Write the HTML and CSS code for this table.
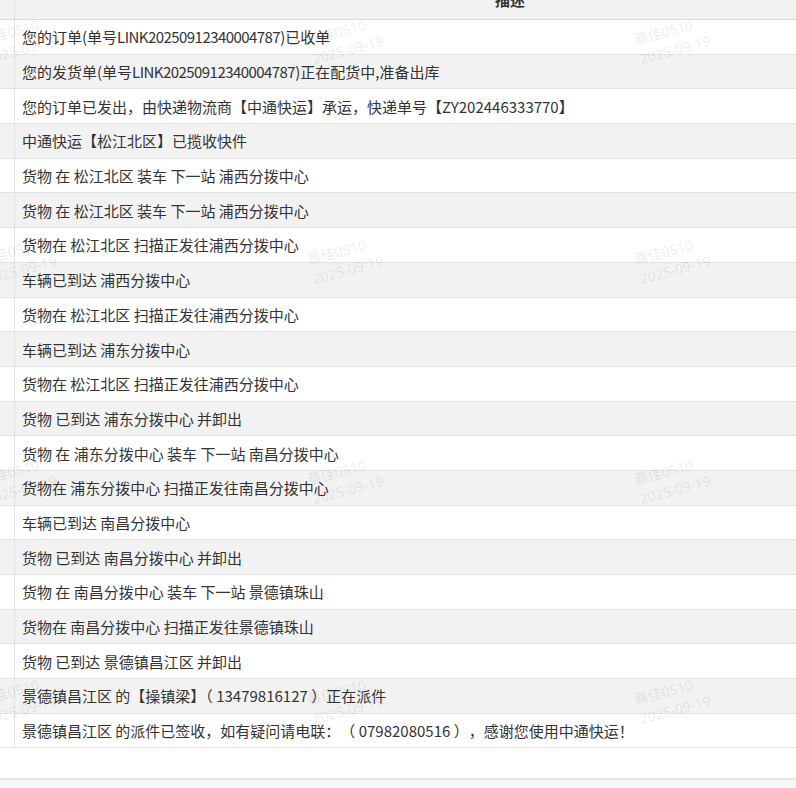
FILE: index.html
```html
<!DOCTYPE html>
<html lang="zh-CN">
<head>
<meta charset="utf-8">
<title>物流详情</title>
<link rel="stylesheet" href="styles.css">
</head>
<body>
<div class="page">
  <div class="panel">
    <div class="table">
      <div class="row head"><div class="idx"></div><div class="desc">描述</div></div>
      <div class="row"><div class="idx"></div><div class="desc">您的订单(单号<span class="code">LINK20250912340004787</span>)已收单</div></div>
      <div class="row"><div class="idx"></div><div class="desc">您的发货单(单号<span class="code">LINK20250912340004787</span>)正在配货中,准备出库</div></div>
      <div class="row"><div class="idx"></div><div class="desc">您的订单已发出，由快递物流商【中通快运】承运，快递单号【ZY202446333770】</div></div>
      <div class="row"><div class="idx"></div><div class="desc">中通快运【松江北区】已揽收快件</div></div>
      <div class="row"><div class="idx"></div><div class="desc">货物 在 松江北区 装车 下一站 浦西分拨中心</div></div>
      <div class="row"><div class="idx"></div><div class="desc">货物 在 松江北区 装车 下一站 浦西分拨中心</div></div>
      <div class="row"><div class="idx"></div><div class="desc">货物在 松江北区 扫描正发往浦西分拨中心</div></div>
      <div class="row"><div class="idx"></div><div class="desc">车辆已到达 浦西分拨中心</div></div>
      <div class="row"><div class="idx"></div><div class="desc">货物在 松江北区 扫描正发往浦西分拨中心</div></div>
      <div class="row"><div class="idx"></div><div class="desc">车辆已到达 浦东分拨中心</div></div>
      <div class="row"><div class="idx"></div><div class="desc">货物在 松江北区 扫描正发往浦西分拨中心</div></div>
      <div class="row"><div class="idx"></div><div class="desc">货物 已到达 浦东分拨中心 并卸出</div></div>
      <div class="row"><div class="idx"></div><div class="desc">货物 在 浦东分拨中心 装车 下一站 南昌分拨中心</div></div>
      <div class="row"><div class="idx"></div><div class="desc">货物在 浦东分拨中心 扫描正发往南昌分拨中心</div></div>
      <div class="row"><div class="idx"></div><div class="desc">车辆已到达 南昌分拨中心</div></div>
      <div class="row"><div class="idx"></div><div class="desc">货物 已到达 南昌分拨中心 并卸出</div></div>
      <div class="row"><div class="idx"></div><div class="desc">货物 在 南昌分拨中心 装车 下一站 景德镇珠山</div></div>
      <div class="row"><div class="idx"></div><div class="desc">货物在 南昌分拨中心 扫描正发往景德镇珠山</div></div>
      <div class="row"><div class="idx"></div><div class="desc">货物 已到达 景德镇昌江区 并卸出</div></div>
      <div class="row"><div class="idx"></div><div class="desc trim">景德镇昌江区 的【操镇梁】（ 13479816127 ）正在派件</div></div>
      <div class="row"><div class="idx"></div><div class="desc">景德镇昌江区 的派件已签收，如有疑问请电联：（ 07982080516 ），感谢您使用中通快运！</div></div>
    </div>
  </div>
  <div class="foot"></div>
</div>
<div class="watermarks">
  <div class="wm"><span>蔡佳0510</span><span>2025-09-19</span></div>
  <div class="wm"><span>蔡佳0510</span><span>2025-09-19</span></div>
  <div class="wm"><span>蔡佳0510</span><span>2025-09-19</span></div>
  <div class="wm"><span>蔡佳0510</span><span>2025-09-19</span></div>
  <div class="wm"><span>蔡佳0510</span><span>2025-09-19</span></div>
  <div class="wm"><span>蔡佳0510</span><span>2025-09-19</span></div>
  <div class="wm"><span>蔡佳0510</span><span>2025-09-19</span></div>
  <div class="wm"><span>蔡佳0510</span><span>2025-09-19</span></div>
  <div class="wm"><span>蔡佳0510</span><span>2025-09-19</span></div>
  <div class="wm"><span>蔡佳0510</span><span>2025-09-19</span></div>
  <div class="wm"><span>蔡佳0510</span><span>2025-09-19</span></div>
  <div class="wm"><span>蔡佳0510</span><span>2025-09-19</span></div>
</div>
</body>
</html>
```

FILE: styles.css
```css
html, body {
  margin: 0;
  padding: 0;
  height: 100%;
  overflow: hidden;
  background: #fff;
}
body {
  position: relative;
  font-family: "Noto Sans CJK SC", "Noto Sans", sans-serif;
  font-size: 15px;
  color: #333;
  text-spacing-trim: space-all;
  text-autospace: no-autospace;
}
.page {
  display: flex;
  flex-direction: column;
  height: 100%;
}
.panel {
  padding-bottom: 30px;
  background: #fff;
}
.table {
  width: 1005px;
  display: flex;
  flex-direction: column;
}
.row {
  display: flex;
  height: 34.7px;
  box-sizing: border-box;
  border-bottom: 1px solid #e2e2e2;
}
.row:nth-child(odd) {
  background: #f2f2f2;
}
.row.head {
  height: 40px;
  margin-top: -20px;
  background: #f2f2f2;
  border-bottom: 1px solid #d9d9d9;
  font-weight: bold;
}
.idx {
  width: 14px;
  flex: none;
  border-right: 1px solid #e2e2e2;
}
.desc {
  flex: 1;
  display: flex;
  align-items: center;
  padding-left: 7px;
  white-space: nowrap;
}
.desc.trim {
  text-spacing-trim: normal;
}
.code {
  letter-spacing: -0.55px;
}
.head .desc {
  justify-content: center;
  padding-left: 0;
}
.foot {
  flex: 1;
  background: #f5f6f7;
  border-top: 1px solid #e4e4e4;
  box-shadow: inset 0 1px 1px rgba(0,0,0,0.04);
}
.watermarks {
  position: absolute;
  left: -18px;
  top: 20px;
  display: grid;
  grid-template-columns: repeat(3, 327px);
  grid-auto-rows: 220px;
  pointer-events: none;
}
.wm {
  width: 76px;
  height: 40px;
  display: flex;
  flex-direction: column;
  transform: rotate(-15deg);
  color: rgba(0, 0, 0, 0.09);
  font-family: "Noto Sans", "Noto Sans CJK SC", sans-serif;
  font-size: 14px;
  line-height: 20px;
  white-space: nowrap;
}
```
